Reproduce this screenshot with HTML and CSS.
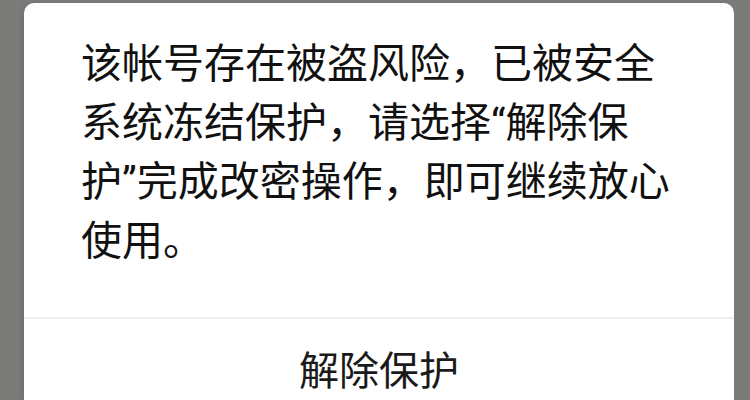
FILE: index.html
```html
<!DOCTYPE html>
<html lang="zh-CN">
<head>
<meta charset="utf-8">
<link rel="stylesheet" href="styles.css">
</head>
<body>
<div class="dialog">
  <div class="message">该帐号存在被盗风险，已被安全系统冻结保护，请选择“解除保护”完成改密操作，即可继续放心使用。</div>
  <div class="actions">
    <button class="action">解除保护</button>
  </div>
</div>
</body>
</html>
```
FILE: styles.css
```css
html, body {
  margin: 0;
  padding: 0;
  height: 100%;
  overflow: hidden;
}
body {
  background: #7b7c7a;
  font-family: "Roboto", "Noto Sans CJK SC", sans-serif;
}
.dialog {
  margin: 3px 0 0 24px;
  width: 710px;
  height: 397px;
  background: #ffffff;
  border-radius: 10px 10px 0 0;
  box-shadow: -3px 0 4px rgba(0,0,0,0.08);
}
.message {
  padding: 32px 0 46px 57px;
  width: 593px;
  font-size: 41px;
  line-height: 59px;
  color: #111111;
}
.actions {
  border-top: 2px solid #efefef;
  display: flex;
  justify-content: center;
}
.action {
  border: none;
  background: none;
  padding: 0;
  margin-top: 28px;
  font-family: "Roboto", "Noto Sans CJK SC", sans-serif;
  font-size: 40px;
  line-height: 50px;
  color: #1a1a1a;
}
```
